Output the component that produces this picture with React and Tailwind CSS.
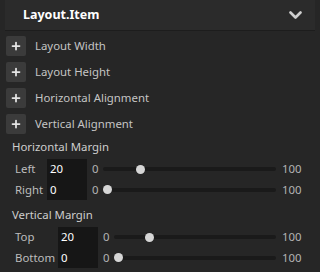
import { Plus } from "lucide-react";

const props = ["Layout Width", "Layout Height", "Horizontal Alignment", "Vertical Alignment"];

function Chevron() {
  return (
    <svg width="13" height="9" viewBox="0 0 13 9" fill="none">
      <path d="M1.5 1.5 L6.5 6.5 L11.5 1.5" stroke="#cfcfcf" strokeWidth="2.6" strokeLinecap="round" strokeLinejoin="round" />
    </svg>
  );
}

function Slider({ value }) {
  const pct = value / 100;
  return (
    <div className="relative h-[4px] rounded-full bg-[#1a1a1a]">
      <div
        className="absolute top-[-2.5px] w-[9px] h-[9px] rounded-full bg-[#d6d6d6]"
        style={{ left: `calc(${pct} * (100% - 9px))` }}
      />
    </div>
  );
}

function MarginGroup({ title, rows, cols }) {
  return (
    <div>
      <div className="h-[18px] flex items-center text-[#cdcdcd]">{title}</div>
      <div className={`grid ${cols} items-center mt-[3px]`}>
        {rows.map(([label, value], i) => (
          <div key={label} className="contents">
            <div className={`pl-[3px] text-[#bdbdbd] ${i ? "h-[21px]" : "h-[20px]"} flex items-center`}>{label}</div>
            <div className={`bg-[#161616] text-white pl-[3px] ${i ? "h-[21px]" : "h-[20px]"} flex items-center`}>{value}</div>
            <div className="pl-[5px] text-[#b4b4b4]">0</div>
            <div className="pl-[4px] pr-[6px]">
              <Slider value={value} />
            </div>
            <div className="text-[#b4b4b4]">100</div>
          </div>
        ))}
      </div>
    </div>
  );
}

export default function App() {
  return (
    <div className="w-[320px] h-[272px] bg-[#262626] overflow-hidden text-[11.4px] font-['Noto_Sans',sans-serif]">
      <div className="mx-[5px] h-[31px] bg-[#2b2b2b] border-b border-[#1d1d1d] flex items-center justify-between pl-[18px] pr-[13px]">
        <span className="text-white font-bold text-[12.5px]">Layout.Item</span>
        <Chevron />
      </div>

      <div className="flex flex-col gap-[6px] pt-[5px] pl-[6px]">
        {props.map((p) => (
          <div key={p} className="flex items-center h-[20px]">
            <div className="w-[20px] h-[20px] rounded-[2px] bg-[#3b3b3b] flex items-center justify-center">
              <Plus size={12} strokeWidth={3.5} color="#e6e6e6" />
            </div>
            <span className="ml-[9px] text-[#c4c4c4]">{p}</span>
          </div>
        ))}
      </div>

      <div className="pl-[12px] mt-[4px]">
        <MarginGroup
          title="Horizontal Margin"
          cols="grid-cols-[35px_40px_12px_1fr_38px]"
          rows={[["Left", 20], ["Right", 0]]}
        />
        <div className="mt-[6px]">
          <MarginGroup
            title="Vertical Margin"
            cols="grid-cols-[46px_40px_12px_1fr_38px]"
            rows={[["Top", 20], ["Bottom", 0]]}
          />
        </div>
      </div>
    </div>
  );
}
